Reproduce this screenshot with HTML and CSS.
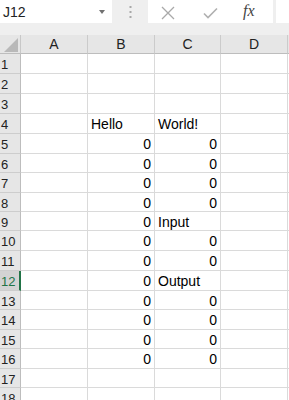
FILE: index.html
```html
<!DOCTYPE html>
<html lang="en">
<head>
    <meta charset="UTF-8">
    <meta name="viewport" content="width=device-width, initial-scale=1.0">
    <title>Sheet</title>
    <link rel="stylesheet" href="styles.css">
</head>
<body>

<div class="toolbar">
    <div class="namebox">
        <span>J12</span>
        <span class="arrow"></span>
    </div>
    <div class="divider">
        <svg width="3" height="14" viewBox="0 0 3 14">
            <rect x="0.5" y="1" width="2" height="2" fill="#a8a8a8"/>
            <rect x="0.5" y="6" width="2" height="2" fill="#a8a8a8"/>
            <rect x="0.5" y="11" width="2" height="2" fill="#a8a8a8"/>
        </svg>
    </div>
    <div class="fbuttons">
        <svg class="btn-cancel" width="14" height="14" viewBox="0 0 14 14">
            <path d="M1 1 L13 13 M13 1 L1 13" stroke="#a9a9a9" stroke-width="1.3" fill="none"/>
        </svg>
        <svg class="btn-enter" width="15" height="12" viewBox="0 0 15 12">
            <path d="M1 6.5 L5 10.5 L14 1.5" stroke="#b0b0b0" stroke-width="1.6" fill="none"/>
        </svg>
        <span class="fx">fx</span>
    </div>
    <div class="formula"></div>
</div>

<div class="sheet" id="sheet">
    <div class="corner">
        <svg width="20" height="18" viewBox="0 0 20 18">
            <polygon points="18,3 18,17 4,17" fill="#b9b9b9"/>
        </svg>
    </div>
</div>

<script>
    // Sheet contents: row -> [A, B, C, D]
    const cells = {
        4: ['', 'Hello', 'World!', ''],
        5: ['', 0, 0, ''],
        6: ['', 0, 0, ''],
        7: ['', 0, 0, ''],
        8: ['', 0, 0, ''],
        9: ['', 0, 'Input', ''],
        10: ['', 0, 0, ''],
        11: ['', 0, 0, ''],
        12: ['', 0, 'Output', ''],
        13: ['', 0, 0, ''],
        14: ['', 0, 0, ''],
        15: ['', 0, 0, ''],
        16: ['', 0, 0, '']
    };
    const sheet = document.getElementById('sheet');
    const selectedRow = 12;

    function addCell(className, text) {
        const el = document.createElement('div');
        el.className = className;
        el.textContent = text;
        sheet.appendChild(el);
        return el;
    }

    ['A', 'B', 'C', 'D', ''].forEach(letter => addCell('col-head', letter));

    for (let r = 1; r <= 18; r++) {
        addCell(r === selectedRow ? 'row-head selected' : 'row-head', r);
        const values = cells[r] || ['', '', '', ''];
        values.forEach(v => {
            addCell(typeof v === 'number' ? 'cell num' : 'cell', v);
        });
        addCell('cell', '');
    }
</script>

</body>
</html>
```

FILE: styles.css
```css
body {
    margin: 0;
    background: #fff;
    font-family: 'Liberation Sans', Arial, sans-serif;
    color: #000;
    overflow: hidden;
}

.toolbar {
    display: flex;
    height: 23px;
    background: #efefef;
    border-bottom: 12px solid #efefef;
}

.namebox {
    width: 112px;
    box-sizing: border-box;
    background: #fff;
    display: flex;
    align-items: center;
    justify-content: space-between;
    padding: 0 7px 0 3px;
    font-size: 14px;
    color: #222;
}

.arrow {
    width: 0;
    height: 0;
    border-left: 3.5px solid transparent;
    border-right: 3.5px solid transparent;
    border-top: 4px solid #707070;
}

.divider {
    width: 36px;
    display: flex;
    justify-content: center;
    align-items: center;
}

.fbuttons {
    width: 125px;
    background: #fff;
    position: relative;
}

.btn-cancel {
    position: absolute;
    left: 13px;
    top: 6px;
}

.btn-enter {
    position: absolute;
    left: 55px;
    top: 7px;
}

.fx {
    position: absolute;
    left: 95px;
    top: 2px;
    font-family: 'Liberation Serif', serif;
    font-style: italic;
    font-size: 16px;
    color: #444;
}

.formula {
    flex: 1;
    margin-left: 3px;
    background: #fff;
}

.sheet {
    display: grid;
    grid-template-columns: 21px 67px 67px 66px 67px 1fr;
    grid-template-rows: 19px 20px 20px 20px 20px 20px 19px 20px 19px 19px 20px 20px 20px 19px 20px 19px 20px 19px 20px;
}

.corner {
    background: #e6e6e6;
    border-right: 1px solid #c8c8c8;
    border-bottom: 1px solid #bdbdbd;
    box-sizing: border-box;
}

.corner svg {
    display: block;
}

.col-head {
    background: #e6e6e6;
    border-right: 1px solid #cbcbcb;
    border-bottom: 1px solid #bdbdbd;
    box-sizing: border-box;
    text-align: center;
    font-size: 14px;
    line-height: 19px;
    padding-top: 0;
    color: #222;
}

.row-head {
    background: #e6e6e6;
    border-right: 1px solid #bdbdbd;
    border-bottom: 1px solid #cdcdcd;
    box-sizing: border-box;
    font-size: 13px;
    line-height: 19px;
    padding-left: 1px;
    padding-top: 1px;
    color: #222;
    white-space: nowrap;
}

.row-head.selected {
    background: #d3d3d3;
    color: #217346;
    border-right: 2px solid #217346;
}

.cell {
    border-right: 1px solid #dadada;
    border-bottom: 1px solid #dadada;
    box-sizing: border-box;
    font-size: 14px;
    line-height: 19px;
    padding: 1px 3px 0 3px;
    white-space: nowrap;
}

.cell.num {
    text-align: right;
}
```
